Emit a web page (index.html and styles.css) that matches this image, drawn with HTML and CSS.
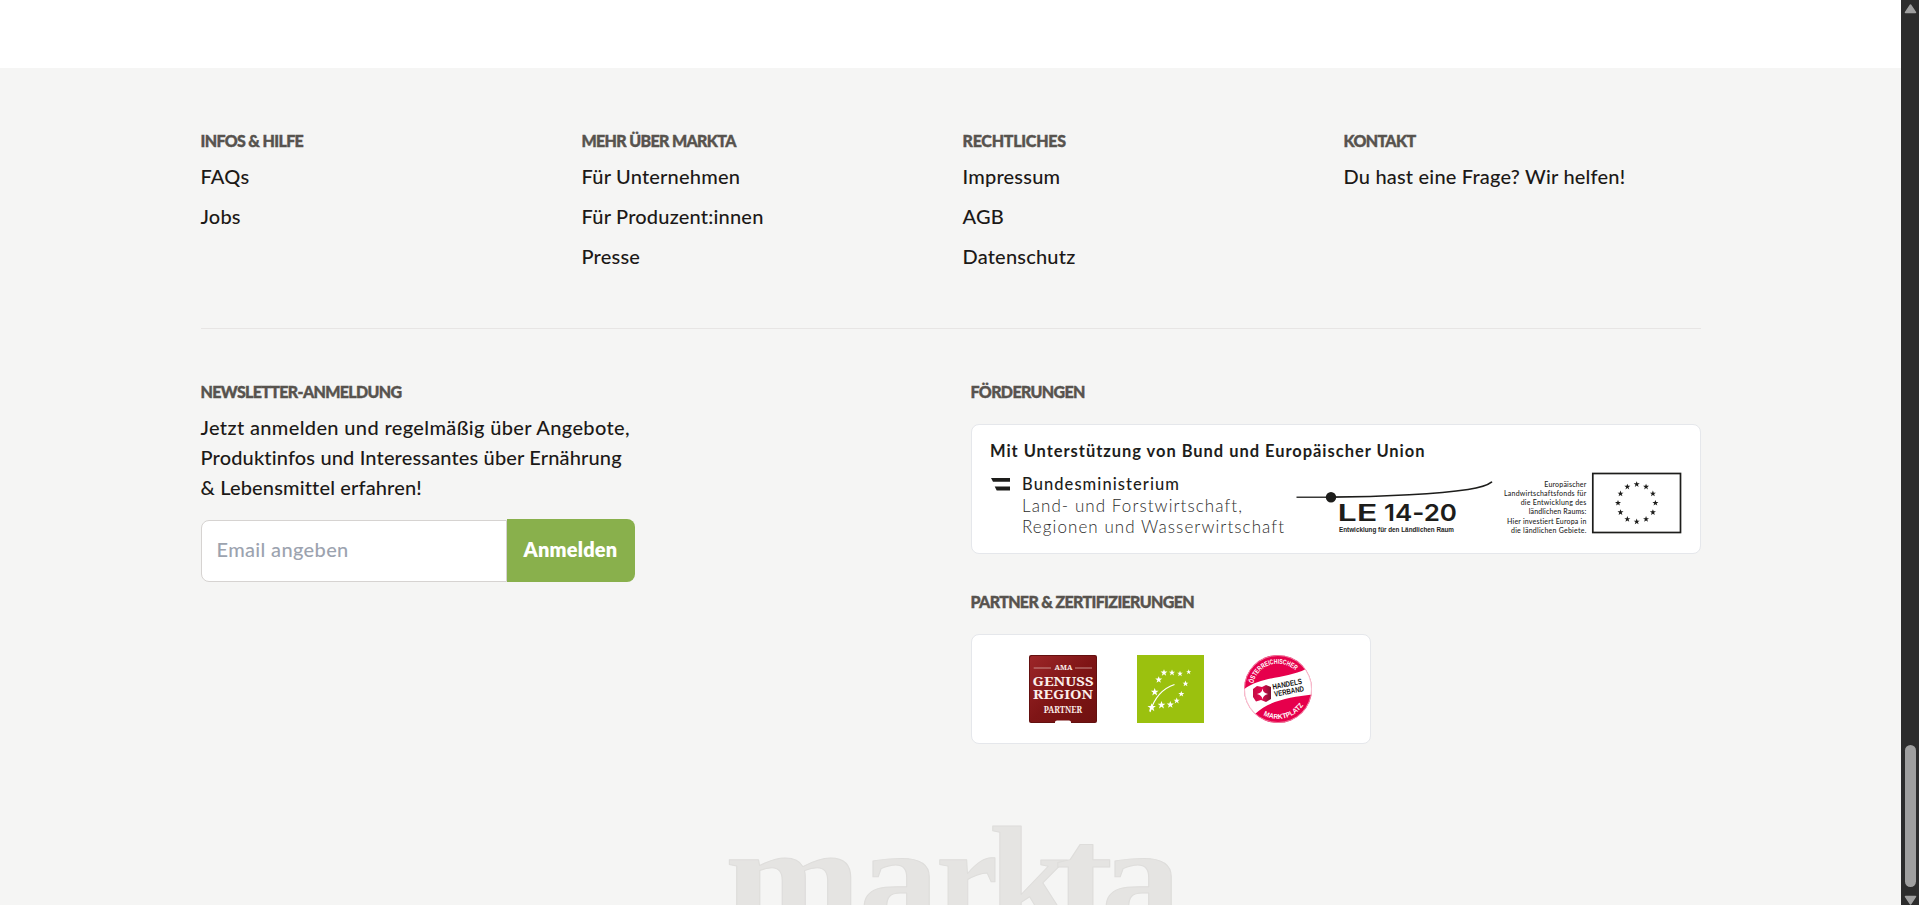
FILE: index.html
```html
<!DOCTYPE html>
<html lang="de">
<head>
<meta charset="utf-8">
<title>markta</title>
<link rel="stylesheet" href="styles.css">
</head>
<body>
<div class="viewport">
<div class="page">
  <footer class="footer">
    <div class="container">
      <nav class="links">
        <section class="col">
          <h3 class="heading">Infos &amp; Hilfe</h3>
          <a class="link">FAQs</a>
          <a class="link">Jobs</a>
        </section>
        <section class="col">
          <h3 class="heading">Mehr über markta</h3>
          <a class="link">Für Unternehmen</a>
          <a class="link">Für Produzent:innen</a>
          <a class="link">Presse</a>
        </section>
        <section class="col">
          <h3 class="heading loose">Rechtliches</h3>
          <a class="link">Impressum</a>
          <a class="link">AGB</a>
          <a class="link">Datenschutz</a>
        </section>
        <section class="col">
          <h3 class="heading">Kontakt</h3>
          <a class="link">Du hast eine Frage? Wir helfen!</a>
        </section>
      </nav>

      <div class="lower">
        <section class="newsletter">
          <h3 class="heading">Newsletter-Anmeldung</h3>
          <p class="intro"><span class="first-line">Jetzt anmelden und regelmäßig über Angebote,</span><br>Produktinfos und Interessantes über Ernährung<br>&amp; Lebensmittel erfahren!</p>
          <form class="signup">
            <input class="email" type="text" placeholder="Email angeben">
            <button class="submit" type="button">Anmelden</button>
          </form>
        </section>

        <section class="support">
          <h3 class="heading">Förderungen</h3>
          <div class="card funding">
            <svg class="funding-art" viewBox="972 425 728 128" width="728" height="128">
              <defs>
                <path id="star" d="M0-3.1L.8-1H3L1.2.4 1.9 2.6 0 1.3-1.9 2.6-1.2.4-3-1H-.8Z"/>
              </defs>
              <g class="lato ink">
                <text class="f-title" x="990" y="457.4" textLength="434.5">Mit Unterstützung von Bund und Europäischer Union</text>
                <text class="f-min" x="1022" y="490.4" textLength="157">Bundesministerium</text>
                <text class="f-sub" x="1022" y="511.8" textLength="220">Land- und Forstwirtschaft,</text>
                <text class="f-sub" x="1022" y="533.3" textLength="262">Regionen und Wasserwirtschaft</text>
              </g>
              <path class="ink" d="M991 478H1010V481.8H993Z M994.7 486.4H1010V490.4H996.7Z"/>
              <path class="le-line" d="M1296.500 497.200H1331"/>
              <path class="le-curve" d="M1331 497.200C1385 497 1440 493.500 1468 489.500C1482 487.500 1488 485 1491.500 482.200"/>
              <circle class="ink" cx="1331" cy="497.200" r="5.200"/>
              <g class="ink">
                <text class="le" x="1337.500" y="521.300" textLength="40" lengthAdjust="spacingAndGlyphs">LE</text>
                <text class="le" x="1384" y="521.300" textLength="73" lengthAdjust="spacingAndGlyphs">14-20</text>
                <text class="le-sub" x="1339" y="532" textLength="115" lengthAdjust="spacingAndGlyphs">Entwicklung für den Ländlichen Raum</text>
              </g>
              <g class="lato ink eu">
                <text x="1544.300" y="486.700" textLength="42">Europäischer</text>
                <text x="1504" y="496" textLength="82.300">Landwirtschaftsfonds für</text>
                <text x="1520.700" y="505.300" textLength="65.600">die Entwicklung des</text>
                <text x="1528.700" y="514.400" textLength="57.600">ländlichen Raums:</text>
                <text x="1507" y="523.700" textLength="79.300">Hier investiert Europa in</text>
                <text x="1511" y="533" textLength="75.300">die ländlichen Gebiete.</text>
              </g>
              <rect class="flag" x="1592.800" y="473.500" width="87.700" height="59"/>
              <g class="ink" transform="translate(1636.700 503)">
                <use href="#star" x="0" y="-18.700"/><use href="#star" x="9.350" y="-16.200"/>
                <use href="#star" x="16.200" y="-9.350"/><use href="#star" x="18.700" y="0"/>
                <use href="#star" x="16.200" y="9.350"/><use href="#star" x="9.350" y="16.200"/>
                <use href="#star" x="0" y="18.700"/><use href="#star" x="-9.350" y="16.200"/>
                <use href="#star" x="-16.200" y="9.350"/><use href="#star" x="-18.700" y="0"/>
                <use href="#star" x="-16.200" y="-9.350"/><use href="#star" x="-9.350" y="-16.200"/>
              </g>
            </svg>
          </div>

          <h3 class="heading">Partner &amp; Zertifizierungen</h3>
          <div class="card partners">
            <svg width="68" height="68" viewBox="0 0 68 68">
              <defs>
                <linearGradient id="red" x1="0" y1="0" x2="1" y2="1">
                  <stop offset="0" stop-color="#9c2628"/><stop offset=".5" stop-color="#7f1516"/><stop offset="1" stop-color="#6f1110"/>
                </linearGradient>
              </defs>
              <rect width="68" height="68" rx="2" fill="#64100f"/>
              <rect x="1" y="1" width="66" height="66" rx="2" fill="url(#red)"/>
              <path d="M26 68V67Q26 65.500 28 65.500H40Q42 65.500 42 67V68Z" fill="#fff"/>
              <path d="M4.700 13H22M46 13H63" stroke="#d9a9a5" stroke-width=".8"/>
              <g fill="#fbeeea" class="ama">
                <text class="ama-s" x="25.500" y="15.400" textLength="18" lengthAdjust="spacingAndGlyphs">AMA</text>
                <text class="ama-l" x="3.500" y="30.700" textLength="61" lengthAdjust="spacingAndGlyphs">GENUSS</text>
                <text class="ama-l" x="4" y="44.300" textLength="60" lengthAdjust="spacingAndGlyphs">REGION</text>
                <text class="ama-p" x="14.700" y="57.700" textLength="38.500" lengthAdjust="spacingAndGlyphs">PARTNER</text>
              </g>
            </svg>
            <svg width="67" height="68" viewBox="0 0 67 68">
              <rect width="67" height="68" fill="#9bc10e"/>
              <g fill="#fff">
                <use href="#star" transform="translate(27 17.700) scale(1.150)"/><use href="#star" transform="translate(35 17.700) scale(1.050)"/>
                <use href="#star" transform="translate(43 18.700) scale(.95)"/><use href="#star" transform="translate(51.700 17) scale(.85)"/>
                <use href="#star" transform="translate(48.500 28.700) scale(1)"/><use href="#star" transform="translate(44.300 39) scale(1)"/>
                <use href="#star" transform="translate(39.700 45.700) scale(1.050)"/><use href="#star" transform="translate(33.300 49.700) scale(1.200)"/>
                <use href="#star" transform="translate(24.500 50) scale(1.300)"/><use href="#star" transform="translate(14.700 52.500) scale(1.400)"/>
                <use href="#star" transform="translate(17.700 37) scale(1.300)"/><use href="#star" transform="translate(21.700 24.700) scale(1.150)"/>
              </g>
              <path d="M13 57C17 44 24 34 37.500 29.500" fill="none" stroke="#fff" stroke-width="1.200"/>
            </svg>
            <svg width="68" height="68" viewBox="0 0 68 68">
              <defs>
                <clipPath id="disc"><circle cx="34" cy="34" r="34"/></clipPath>
                <path id="arc-top" d="M9.300 28.500A25.300 25.300 0 0 1 59.300 34"/>
                <path id="arc-bottom" d="M19.500 60.200A30 30 0 0 0 63.900 36"/>
                <linearGradient id="gem" x1="0" x2="1"><stop offset="0" stop-color="#c30f44"/><stop offset=".5" stop-color="#e4064f"/><stop offset="1" stop-color="#7d1230"/></linearGradient>
              </defs>
              <g clip-path="url(#disc)">
                <rect width="68" height="68" fill="#e6004c"/>
                <path d="M-1 35C17 21 42 24 62 14L72 20V39C50 42 27 44 11 59L-1 60Z" fill="#fff"/>
              </g>
              <circle cx="34" cy="34" r="33.500" fill="none" stroke="#f3a9bd" stroke-width=".7"/>
              <g class="seal" fill="#fff">
                <text><textPath href="#arc-top" textLength="53" lengthAdjust="spacingAndGlyphs">ÖSTERREICHISCHER</textPath></text>
                <text><textPath href="#arc-bottom" textLength="45" lengthAdjust="spacingAndGlyphs">MARKTPLATZ</textPath></text>
              </g>
              <path d="M9 34L13 31 18 32 22 30 27 32V44L22 47 17 45 12 46.500 9 42Z" fill="url(#gem)"/>
              <path d="M18.500 33.500Q19 38 24 39Q19 40 18.500 44.500Q18 40 13 39Q18 38 18.500 33.500Z" fill="#fff"/>
              <g class="hv" transform="rotate(-11 29 35)">
                <text x="29" y="34.500" textLength="30" lengthAdjust="spacingAndGlyphs">HANDELS</text>
                <text x="29.500" y="42" textLength="30" lengthAdjust="spacingAndGlyphs">VERBAND</text>
              </g>
            </svg>
          </div>
        </section>
      </div>

      <svg class="wordmark" width="460" height="90" viewBox="720 815 460 90">
        <text class="wordmark-text" y="926"><tspan x="724" textLength="136" lengthAdjust="spacingAndGlyphs">m</tspan><tspan x="858" textLength="80" lengthAdjust="spacingAndGlyphs">a</tspan><tspan x="935" textLength="62" lengthAdjust="spacingAndGlyphs">r</tspan><tspan x="988" textLength="84" lengthAdjust="spacingAndGlyphs">k</tspan><tspan x="1054" textLength="58" lengthAdjust="spacingAndGlyphs">t</tspan><tspan x="1100" textLength="80" lengthAdjust="spacingAndGlyphs">a</tspan></text>
      </svg>
    </div>
  </footer>
</div>
<div class="scrollbar">
  <svg class="arrow" width="18" height="18"><path d="M9.500 5L14.500 12.500H4.500Z"/></svg>
  <div class="thumb"></div>
  <svg class="arrow" width="18" height="18"><path d="M4.500 9.500H14.500L9.500 17Z"/></svg>
</div>
</div>
</body>
</html>
```
FILE: styles.css
```css
* { box-sizing: border-box; }
html, body { margin: 0; height: 100%; overflow: hidden; }
body { background: #fff; font-family: Lato, "Noto Sans", sans-serif; font-size: 20px; color: #1c1917; font-variant-ligatures: none; }
.viewport { display: flex; height: 905px; }
.page { flex: 1; min-width: 0; height: 905px; overflow: hidden; padding-top: 68px; }
.footer { background: #f5f5f4; height: 1000px; padding-top: 61px; }
.container { width: 1500px; margin: 0 auto; }
.links { display: grid; grid-template-columns: repeat(4, 1fr); column-gap: 24px; height: 200px; border-bottom: 1px solid #e7e5e4; }
.col { display: flex; flex-direction: column; }
.heading { margin: 0; font-size: 16px; line-height: 24px; font-weight: 900; letter-spacing: -0.65px; text-transform: uppercase; color: #57534e; white-space: nowrap; -webkit-text-stroke: 0.4px #57534e; }
.heading.loose { letter-spacing: -0.25px; }
.link { line-height: 30px; margin-bottom: 10px; white-space: nowrap; font-weight: 500; letter-spacing: 0.2px; }
.col .heading { margin-bottom: 8px; }
.lower { display: grid; grid-template-columns: 730px 730px; column-gap: 40px; padding-top: 51px; }
.intro { margin: 8px 0 17px; line-height: 30px; font-weight: 500; white-space: nowrap; letter-spacing: 0.15px; }
.first-line { letter-spacing: 0.36px; }
.signup { display: flex; align-items: flex-end; margin: 0; }
.email { width: 306px; height: 62px; border: 1px solid #d6d3d1; border-radius: 8px 0 0 8px; padding: 0 15px 4px; font: inherit; font-weight: 500; letter-spacing: 0.35px; background: #fff; }
.email::placeholder { color: #9ca3af; opacity: 1; }
.submit { width: 128px; height: 63px; border: 0; border-radius: 0 8px 8px 0; background: #89b04c; color: #fff; font: inherit; font-weight: 800; letter-spacing: 0.2px; padding: 0 0 3px; }
.card { background: #fff; border: 1px solid #e5e7eb; border-radius: 8px; }
.funding { width: 730px; height: 130px; margin: 20px 0 36px; }
.funding-art { display: block; }
.partners { width: 400px; height: 110px; margin-top: 20px; display: flex; justify-content: center; align-items: center; gap: 40px; }
.ink { fill: #1d1d1b; }
.lato { font-family: Lato, sans-serif; }
.f-title { font-size: 16.500px; font-weight: 700; }
.f-min { font-size: 16.500px; font-weight: 500; }
.f-sub { font-size: 17px; font-weight: 300; fill: #2c2c2b; }
.le-line { stroke: #3a3a39; stroke-width: 1.400; }
.le-curve { stroke: #1d1d1b; stroke-width: 1.700; fill: none; stroke-linecap: round; }
.le { font-family: Inter, "Liberation Sans", sans-serif; font-size: 23.400px; font-weight: 600; }
.le-sub { font-family: "Liberation Sans", sans-serif; font-size: 7.800px; font-weight: 700; }
.eu { font-size: 7px; font-weight: 500; }
.flag { fill: none; stroke: #1d1d1b; stroke-width: 1.700; }
.ama { font-family: "Noto Serif", "Liberation Serif", serif; font-weight: 700; }
.ama-s { font-size: 7px; }
.ama-l { font-size: 12.800px; }
.ama-p { font-size: 8px; }
.seal { font-family: "Liberation Sans", sans-serif; font-size: 7px; font-weight: 700; }
.hv { font-family: "Liberation Sans", sans-serif; font-size: 7.800px; font-weight: 700; fill: #111; }
.wordmark { display: block; margin: 71px auto 0; }
.wordmark-text { font-family: "Liberation Serif", serif; font-weight: 700; font-size: 143px; fill: #e5e4e2; stroke: #dedddb; stroke-width: 1px; stroke-linejoin: round; }
.scrollbar { width: 18px; height: 905px; background: #2c2c2c; display: flex; flex-direction: column; justify-content: space-between; }
.arrow { fill: #9f9f9f; stroke: #9f9f9f; stroke-width: 1.500; stroke-linejoin: round; display: block; }
.thumb { width: 11px; height: 142px; border-radius: 6px; background: #9f9f9f; margin: auto 3px 0 4px; }
```
